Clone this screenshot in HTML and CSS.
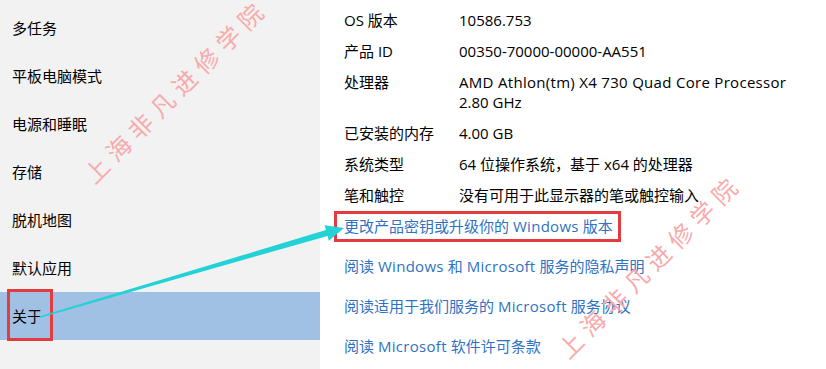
FILE: index.html
```html
<!DOCTYPE html>
<html lang="zh-CN">
<head>
<meta charset="utf-8">
<title>关于</title>
<link rel="stylesheet" href="styles.css">
</head>
<body>
<div class="page">
  <nav class="sidebar">
    <div class="nav-item">多任务</div>
    <div class="nav-item">平板电脑模式</div>
    <div class="nav-item">电源和睡眠</div>
    <div class="nav-item">存储</div>
    <div class="nav-item">脱机地图</div>
    <div class="nav-item">默认应用</div>
    <div class="nav-item selected">关于</div>
  </nav>
  <main class="content">
    <div class="specs">
      <div class="label">OS 版本</div><div class="value">10586.753</div>
      <div class="label">产品 ID</div><div class="value">00350-70000-00000-AA551</div>
      <div class="label">处理器</div><div class="value"><span class="latin">AMD Athlon(tm) X4 730 Quad Core Processor</span><br>2.80 GHz</div>
      <div class="label">已安装的内存</div><div class="value">4.00 GB</div>
      <div class="label">系统类型</div><div class="value">64 位操作系统，基于 x64 的处理器</div>
      <div class="label">笔和触控</div><div class="value">没有可用于此显示器的笔或触控输入</div>
    </div>
    <div class="links">
      <a class="link">更改产品密钥或升级你的 <span class="latin">Windows</span> 版本</a>
      <a class="link">阅读 <span class="latin">Windows</span> 和 <span class="latin">Microsoft</span> 服务的隐私声明</a>
      <a class="link">阅读适用于我们服务的 <span class="latin">Microsoft</span> 服务协议</a>
      <a class="link">阅读 <span class="latin">Microsoft</span> 软件许可条款</a>
    </div>
  </main>

  <div class="mark mark-about"></div>
  <div class="mark mark-link"></div>

  <svg class="arrow" width="826" height="369" viewBox="0 0 826 369">
    <polygon points="40.2,317.7 39.8,316.3 325.9,230.1 324.5,225.3 344,228 328.9,240.7 327.5,235.9" fill="#22d2d6"/>
  </svg>

  <div class="watermark wm-1">上海非凡进修学院</div>
  <div class="watermark wm-2">上海非凡进修学院</div>
</div>
</body>
</html>
```
FILE: styles.css
```css
* { box-sizing: border-box; }
html, body { margin: 0; padding: 0; }
body {
  width: 826px;
  height: 369px;
  overflow: hidden;
  background: #fff;
  font-family: "Open Sans", "Noto Sans CJK SC", sans-serif;
  font-size: 15px;
  color: #000;
}
.page {
  position: relative;
  display: flex;
  width: 826px;
  height: 369px;
}
.sidebar {
  width: 320px;
  flex: none;
  background: #f2f2f2;
  padding-top: 4px;
  display: flex;
  flex-direction: column;
}
.nav-item {
  height: 48px;
  display: flex;
  align-items: center;
  padding-left: 12px;
  line-height: 20px;
}
.nav-item.selected {
  background: #a1c1e4;
}
.content {
  flex: 1;
  padding: 10px 0 0 24px;
  display: flex;
  flex-direction: column;
}
.specs {
  display: grid;
  grid-template-columns: 115px auto;
  row-gap: 11px;
  line-height: 20px;
}
.latin {
  letter-spacing: 0.3px;
}
.links {
  margin-top: 11px;
  display: flex;
  flex-direction: column;
  gap: 20px;
  line-height: 20px;
}
.link {
  color: #2f72c4;
  text-decoration: none;
}
.mark {
  position: absolute;
  border: 3px solid #e23b40;
}
.mark-about { left: 7px; top: 289px; width: 46px; height: 52px; }
.mark-link { left: 334px; top: 211px; width: 287px; height: 31px; }
.arrow {
  position: absolute;
  left: 0;
  top: 0;
  pointer-events: none;
}
.watermark {
  position: absolute;
  font-family: "Noto Sans CJK SC", sans-serif;
  font-weight: 400;
  font-size: 24px;
  line-height: 26px;
  letter-spacing: 7px;
  padding: 2px 0 2px 7px;
  color: #f8aaac;
  white-space: nowrap;
  transform: translate(-50%, -50%) rotate(-45deg);
  pointer-events: none;
}
.wm-1 { left: 173px; top: 93px; }
.wm-2 { left: 647px; top: 268px; }
```
